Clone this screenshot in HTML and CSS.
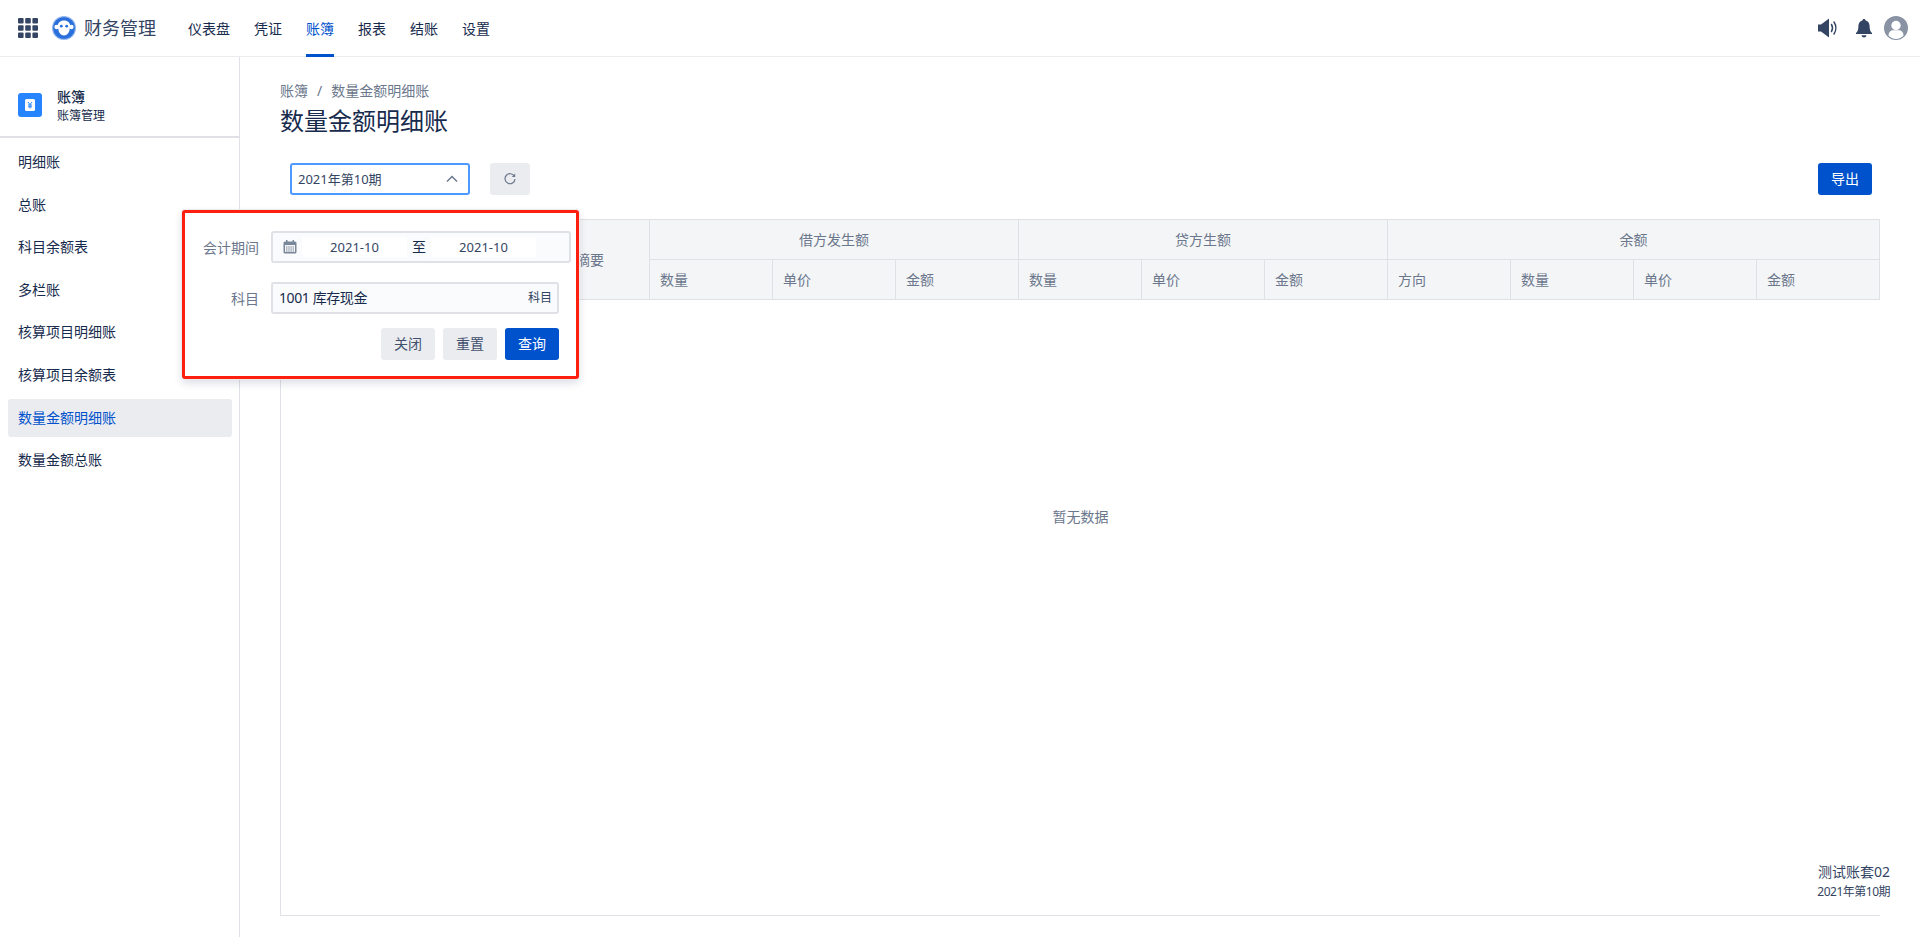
FILE: index.html
```html
<!DOCTYPE html>
<html lang="zh-CN">
<head>
    <meta charset="UTF-8">
    <meta name="viewport" content="width=device-width, initial-scale=1.0">
    <title>数量金额明细账</title>
    <link rel="stylesheet" href="styles.css">
</head>
<body>
    <header class="topbar">
        <svg class="apps-icon" viewBox="0 0 20 20" width="20" height="20">
            <g fill="#344563">
                <rect x="0" y="0" width="5.6" height="5.6" rx="1"/><rect x="7.2" y="0" width="5.6" height="5.6" rx="1"/><rect x="14.4" y="0" width="5.6" height="5.6" rx="1"/>
                <rect x="0" y="7.2" width="5.6" height="5.6" rx="1"/><rect x="7.2" y="7.2" width="5.6" height="5.6" rx="1"/><rect x="14.4" y="7.2" width="5.6" height="5.6" rx="1"/>
                <rect x="0" y="14.4" width="5.6" height="5.6" rx="1"/><rect x="7.2" y="14.4" width="5.6" height="5.6" rx="1"/><rect x="14.4" y="14.4" width="5.6" height="5.6" rx="1"/>
            </g>
        </svg>
        <svg class="logo" viewBox="0 0 24 24" width="24" height="24">
            <circle cx="12" cy="12" r="12" fill="#8fb4ee"/>
            <circle cx="12" cy="12" r="10.8" fill="#2a6fdb"/>
            <circle cx="4.600" cy="11" r="2.200" fill="#fff"/>
            <circle cx="19.400" cy="11" r="2.200" fill="#fff"/>
            <path d="M12 4.600c-3.900 0-6.200 2.500-6.200 5.400 0 1.500.6 2.400.6 3.200 0 3.200 2.500 6.200 5.600 6.200s5.600-3 5.600-6.200c0-.8.600-1.700.600-3.200 0-2.900-2.300-5.400-6.200-5.400z" fill="#fff"/>
            <circle cx="9.300" cy="10.200" r="1.400" fill="#2a6fdb"/>
            <circle cx="14.700" cy="10.200" r="1.400" fill="#2a6fdb"/>
        </svg>
        <span class="brand">财务管理</span>
        <nav class="topnav">
            <a class="topnav-item">仪表盘</a>
            <a class="topnav-item">凭证</a>
            <a class="topnav-item active">账簿</a>
            <a class="topnav-item">报表</a>
            <a class="topnav-item">结账</a>
            <a class="topnav-item">设置</a>
        </nav>
        <div class="top-actions">
            <svg viewBox="0 0 20 20" width="20" height="20">
                <path d="M0 6.500h3L11 .5v19l-8-6H0z" fill="#344563"/>
                <path d="M13.500 6.500c1.200 2 1.200 5 0 7M16 4c2.400 3.500 2.400 8.500 0 12" fill="none" stroke="#344563" stroke-width="1.500" stroke-linecap="round"/>
            </svg>
            <svg viewBox="0 0 18 20" width="18" height="20">
                <path d="M9 1c.9 0 1.500.6 1.600 1.400 2.700.7 4 2.900 4 5.600 0 3.600.6 5.200 2.400 7v1H1v-1c1.800-1.800 2.400-3.400 2.400-7 0-2.700 1.300-4.900 4-5.600C7.500 1.600 8.100 1 9 1z" fill="#344563"/>
                <path d="M6.500 17.300h5C11.300 18.700 10.300 19.500 9 19.500s-2.300-.8-2.500-2.200z" fill="#344563"/>
            </svg>
            <svg viewBox="0 0 24 24" width="24" height="24">
                <circle cx="12" cy="12" r="12" fill="#8993a4"/>
                <circle cx="12" cy="9.500" r="4.700" fill="#fff"/>
                <path d="M4.500 19.500c0-3.500 2.500-5.200 4.500-5.200h6c2 0 4.500 1.700 4.500 5.200C17.500 21.800 15 23 12 23s-5.500-1.200-7.500-3.500z" fill="#fff"/>
            </svg>
        </div>
    </header>

    <div class="layout">
        <aside class="sidebar">
            <div class="side-head">
                <svg class="side-icon" viewBox="0 0 24 24" width="24" height="24">
                    <rect width="24" height="24" rx="3" fill="#2684ff"/>
                    <rect x="7" y="6" width="10" height="12" rx="1.500" fill="#fff"/>
                    <path d="M10 9l2 2.500L14 9M12 11.500V15.500M10 12h4M10 13.800h4" fill="none" stroke="#2684ff" stroke-width="1"/>
                </svg>
                <div>
                    <div class="side-title">账簿</div>
                    <div class="side-sub">账簿管理</div>
                </div>
            </div>
            <ul class="side-menu">
                <li class="side-item">明细账</li>
                <li class="side-item">总账</li>
                <li class="side-item">科目余额表</li>
                <li class="side-item">多栏账</li>
                <li class="side-item">核算项目明细账</li>
                <li class="side-item">核算项目余额表</li>
                <li class="side-item active">数量金额明细账</li>
                <li class="side-item">数量金额总账</li>
            </ul>
        </aside>

        <main class="content">
            <div class="breadcrumb">
                <span>账簿</span><span class="crumb-sep">/</span><span>数量金额明细账</span>
            </div>
            <h1 class="page-title">数量金额明细账</h1>

            <div class="toolbar">
                <div class="period-select">
                    <span>2021年第10期</span>
                    <svg viewBox="0 0 12 8" width="12" height="8">
                        <path d="M1 6.500L6 1.500l5 5" fill="none" stroke="#6b778c" stroke-width="1.500"/>
                    </svg>
                </div>
                <button class="btn btn-icon">
                    <svg viewBox="0 0 14 14" width="14" height="14">
                        <path d="M11.500 4.500A5 5 0 1 0 12 7" fill="none" stroke="#6b778c" stroke-width="1.200"/>
                        <path d="M12.200 1.600v3.400H8.800z" fill="#6b778c"/>
                    </svg>
                </button>
                <button class="btn btn-primary btn-export">导出</button>
            </div>

            <table class="ledger">
                <colgroup>
                    <col class="col-date">
                    <col class="col-voucher">
                    <col class="col-summary">
                    <col span="3">
                    <col span="3">
                    <col span="3">
                    <col class="col-last">
                </colgroup>
                <thead>
                    <tr>
                        <th rowspan="2"></th>
                        <th rowspan="2"></th>
                        <th rowspan="2">摘要</th>
                        <th colspan="3" class="center">借方发生额</th>
                        <th colspan="3" class="center">贷方生额</th>
                        <th colspan="4" class="center">余额</th>
                    </tr>
                    <tr>
                        <th>数量</th><th>单价</th><th>金额</th>
                        <th>数量</th><th>单价</th><th>金额</th>
                        <th>方向</th><th>数量</th><th>单价</th><th>金额</th>
                    </tr>
                </thead>
            </table>
            <div class="ledger-empty">暂无数据</div>
        </main>
    </div>

    <!-- filter popup, opens over the table -->
    <form class="filter-popup">
        <div class="field">
            <label class="field-label">会计期间</label>
            <div class="range-input">
                <svg viewBox="0 0 14 14" width="14" height="14">
                    <rect x="0.500" y="1.500" width="13" height="12" rx="1.500" fill="#7a869a"/>
                    <rect x="2" y="5" width="10" height="7" fill="#f4f5f7"/>
                    <rect x="3" y="0" width="1.500" height="3" fill="#7a869a"/>
                    <rect x="9.500" y="0" width="1.500" height="3" fill="#7a869a"/>
                    <path d="M3 7h8M3 9h8M3 11h8" stroke="#7a869a" stroke-width="1" stroke-dasharray="1.500 .7"/>
                </svg>
                <span class="range-date">2021-10</span>
                <span class="range-sep">至</span>
                <span class="range-date">2021-10</span>
            </div>
        </div>
        <div class="field">
            <label class="field-label">科目</label>
            <div class="subject-input">
                <span class="subject-name">1001 库存现金</span>
                <span class="subject-tag">科目</span>
            </div>
        </div>
        <div class="popup-actions">
            <button type="button" class="btn btn-grey">关闭</button>
            <button type="button" class="btn btn-grey">重置</button>
            <button type="button" class="btn btn-primary">查询</button>
        </div>
    </form>

    <div class="book-info">
        <div class="book-name">测试账套02</div>
        <div class="book-period">2021年第10期</div>
    </div>
</body>
</html>
```

FILE: styles.css
```css
:root {
    --text-dark: #172b4d;
    --text-mid: #344563;
    --text-soft: #6b778c;
    --line: #dfe1e6;
    --grey-bg: #ebecf0;
    --blue: #0052cc;
}

* {
    box-sizing: border-box;
}

html, body {
    height: 100%;
}

body {
    margin: 0;
    overflow: hidden;
    background: #fff;
    color: var(--text-dark);
    font-family: "Noto Sans", "Noto Sans CJK SC", sans-serif;
    font-size: 14px;
    line-height: 20px;
}

.topbar {
    height: 57px;
    display: flex;
    align-items: center;
    padding: 0 12px 1px 18px;
    border-bottom: 1px solid var(--grey-bg);
}

.logo {
    margin-left: 14px;
}

.brand {
    margin-left: 8px;
    font-size: 18px;
    color: var(--text-mid);
}

.topnav {
    display: flex;
    align-self: stretch;
    gap: 24px;
    margin-left: 32px;
}

.topnav-item {
    display: flex;
    align-items: center;
    height: 57px;
    border-bottom: 3px solid transparent;
    padding-top: 3px;
    color: var(--text-dark);
}

.topnav-item.active {
    color: var(--blue);
    border-bottom-color: var(--blue);
}

.top-actions {
    display: flex;
    align-items: center;
    gap: 17px;
    margin-left: auto;
}

.top-actions svg:last-child {
    margin-left: -6px;
}

.layout {
    display: flex;
    height: 880px;
}

.sidebar {
    width: 240px;
    flex-shrink: 0;
    border-right: 1px solid var(--line);
}

.side-head {
    height: 81px;
    display: flex;
    align-items: center;
    gap: 15px;
    padding: 17px 0 0 18px;
    border-bottom: 2px solid var(--line);
}

.side-title {
    font-weight: 500;
}

.side-sub {
    font-size: 12px;
    line-height: 16px;
    margin-top: 1px;
}

.side-menu {
    list-style: none;
    margin: 0;
    padding: 5px 7px 0 8px;
    display: flex;
    flex-direction: column;
    gap: 4.6px;
}

.side-item {
    height: 38px;
    line-height: 38px;
    padding-left: 10px;
    border-radius: 3px;
}

.side-item.active {
    background: var(--grey-bg);
    color: var(--blue);
}

.content {
    flex: 1;
    padding: 24px 40px 0;
}

.breadcrumb {
    color: var(--text-soft);
}

.crumb-sep {
    margin: 0 9px;
}

.page-title {
    margin: 4px 0 0;
    font-size: 24px;
    line-height: 32px;
    font-weight: 400;
}

.toolbar {
    display: flex;
    align-items: flex-start;
    margin-top: 26px;
    padding: 0 8px 0 10px;
}

.period-select {
    width: 180px;
    height: 32px;
    display: flex;
    align-items: center;
    justify-content: space-between;
    padding: 0 10px 0 6px;
    border: 2px solid #4c9aff;
    border-radius: 3px;
    font-size: 13px;
    color: var(--text-mid);
}

.btn {
    height: 32px;
    width: 54px;
    padding: 0;
    border: none;
    border-radius: 3px;
    font: inherit;
    cursor: pointer;
}

.btn-icon {
    width: 40px;
    margin-left: 20px;
    background: var(--grey-bg);
    display: flex;
    align-items: center;
    justify-content: center;
}

.btn-primary {
    background: var(--blue);
    color: #fff;
}

.btn-export {
    margin-left: auto;
}

.btn-grey {
    background: var(--grey-bg);
    color: #42526e;
}

.ledger {
    width: 1600px;
    margin-top: 24px;
    table-layout: fixed;
    border-collapse: collapse;
}

.col-date {
    width: 130px;
}

.col-voucher {
    width: 155px;
}

.col-summary {
    width: 84px;
}

.ledger th {
    height: 40px;
    padding: 0 10px;
    border: 1px solid var(--line);
    background: #f4f5f7;
    color: var(--text-soft);
    font-weight: 400;
    text-align: left;
}

.ledger th.center {
    text-align: center;
}

.ledger-empty {
    width: 1600px;
    height: 616px;
    padding-top: 207px;
    border-left: 1px solid var(--line);
    border-bottom: 1px solid var(--line);
    text-align: center;
    color: var(--text-soft);
}

.filter-popup {
    position: absolute;
    left: 182px;
    top: 210px;
    width: 397px;
    height: 169px;
    background: #fff;
    border: 3px solid #ff1f0f;
    border-radius: 3px;
    box-shadow: 0 0 0 1px var(--grey-bg), 0 4px 8px rgba(9, 30, 66, 0.15);
    padding: 18px 0 0;
}

.field {
    display: flex;
    align-items: center;
    margin-bottom: 19px;
}

.field-label {
    width: 74px;
    padding-top: 1px;
    text-align: right;
    color: var(--text-soft);
}

.range-input,
.subject-input {
    height: 32px;
    display: flex;
    align-items: center;
    margin-left: 12px;
    background: #fafbfc;
    border: 2px solid var(--line);
    border-radius: 3px;
}

.range-input {
    width: 300px;
    padding-left: 10px;
    font-size: 13px;
}

.range-date {
    width: 105px;
    height: 20px;
    background: #fff;
    text-align: center;
    color: var(--text-mid);
}

.range-date:first-of-type {
    margin-left: 5px;
}

.range-sep {
    width: 24px;
    font-size: 14px;
    text-align: center;
    color: var(--text-dark);
}

.subject-input {
    width: 288px;
    justify-content: space-between;
    padding: 0 5px 0 6px;
}

.subject-name {
    letter-spacing: -0.4px;
}

.subject-tag {
    font-size: 12px;
    color: var(--text-mid);
}

.popup-actions {
    display: flex;
    justify-content: flex-end;
    gap: 8px;
    margin-top: -5px;
    padding-right: 17px;
}

.book-info {
    position: absolute;
    right: 30px;
    top: 862px;
    text-align: right;
    color: var(--text-mid);
}

.book-period {
    font-size: 12px;
    letter-spacing: -0.5px;
}
```
